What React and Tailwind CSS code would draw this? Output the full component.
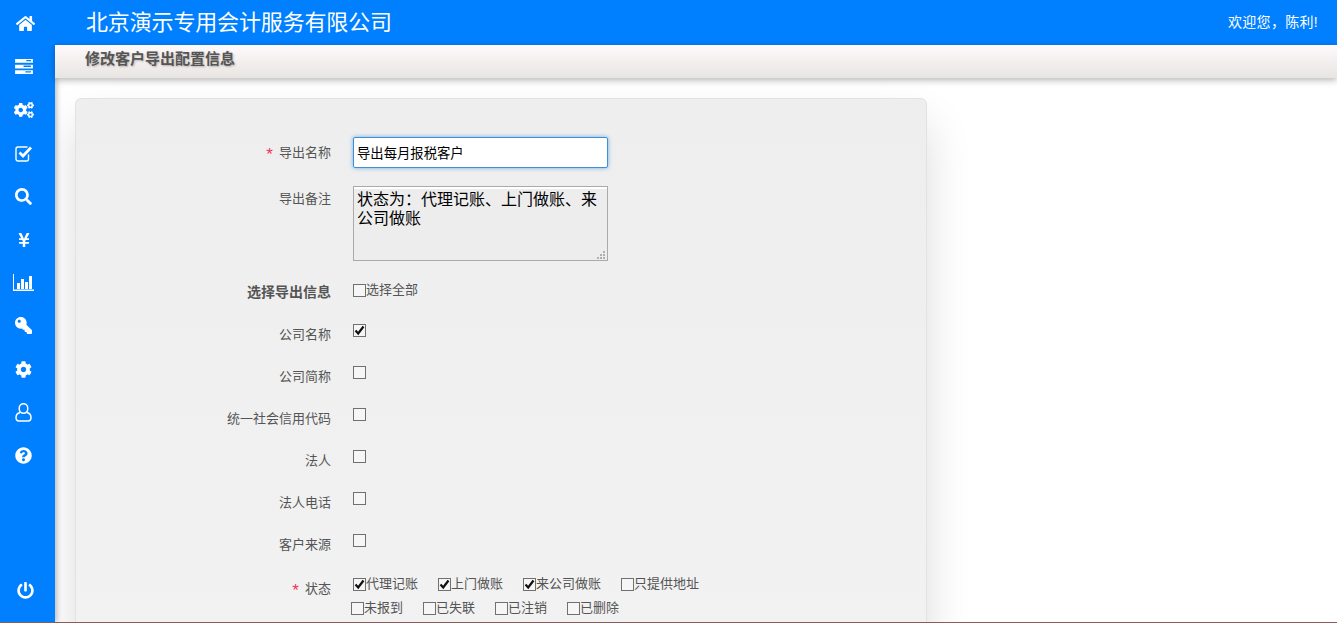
import { FaHome, FaCogs, FaSearch, FaYenSign, FaKey, FaCog, FaQuestionCircle, FaPowerOff } from "react-icons/fa";

const CJK = "font-['Liberation_Sans','Noto_Sans_CJK_SC',sans-serif]";

function ServerIcon() {
  return (
    <svg width="18" height="15" viewBox="0 0 19 16">
      <path
        fill="currentColor"
        fillRule="evenodd"
        d="M0 0h19v4H0zM12 1v1.500h5V1zM0 6h19v4H0zM9 7v1.500h8V7zM0 12h19v4H0zM11 13v1.500h6V13z"
      />
    </svg>
  );
}

function CheckSquareIcon() {
  return (
    <svg width="18" height="17" viewBox="0 0 18 17" fill="none" stroke="currentColor">
      <path d="M13.500 9.500v4.500a2 2 0 0 1-2 2H3a2 2 0 0 1-2-2V4a2 2 0 0 1 2-2h9.500" strokeWidth="1.400" />
      <path d="M4.500 7.500l3.500 3.500 8-8.500" strokeWidth="2.800" />
    </svg>
  );
}

function UserIcon() {
  return (
    <svg width="17" height="19" viewBox="0 0 17 19" fill="none" stroke="currentColor" strokeWidth="1.500">
      <ellipse cx="8.500" cy="5.500" rx="4.300" ry="4.800" />
      <path d="M5 9.500C2.500 10.200 1 11.500 1 14.500c0 2 1 3.500 3 3.500h9c2 0 3-1.500 3-3.500 0-3-1.500-4.300-4-5" />
    </svg>
  );
}

function BarChartIcon() {
  return (
    <svg width="21" height="17" viewBox="0 0 21 17" fill="currentColor">
      <path d="M0 0h1v15.500h20V17H0z" />
      <rect x="4" y="9" width="3" height="6" />
      <rect x="8" y="5" width="3" height="10" />
      <rect x="12" y="8" width="3" height="7" />
      <rect x="16" y="2" width="3" height="13" />
    </svg>
  );
}

const NAV_ICONS = [
  { id: "home", icon: <FaHome size={19} className="ml-[3px]" /> },
  { id: "server", icon: <ServerIcon /> },
  { id: "cogs", icon: <FaCogs size={20} /> },
  { id: "check", icon: <CheckSquareIcon /> },
  { id: "search", icon: <FaSearch size={17} /> },
  { id: "yen", icon: <FaYenSign size={16} /> },
  { id: "chart", icon: <BarChartIcon /> },
  { id: "key", icon: <FaKey size={17} className="-scale-x-100" /> },
  { id: "cog", icon: <FaCog size={17} /> },
  { id: "user", icon: <UserIcon /> },
  { id: "help", icon: <FaQuestionCircle size={17} /> },
];

const FIELDS = ["公司名称", "公司简称", "统一社会信用代码", "法人", "法人电话", "客户来源"];

const STATUS_ROW_1 = [
  { text: "代理记账", checked: true, width: "w-[85px]" },
  { text: "上门做账", checked: true, width: "w-[85px]" },
  { text: "来公司做账", checked: true, width: "w-[98px]" },
  { text: "只提供地址", checked: false, width: "" },
];

const STATUS_ROW_2 = ["未报到", "已失联", "已注销", "已删除"];

function Check({ checked }) {
  return (
    <span className="flex h-[13px] w-[13px] shrink-0 items-center justify-center border border-[#707070] bg-[#f6f6f6]">
      {checked && (
        <svg width="11" height="11" viewBox="0 0 11 11">
          <path d="M1.500 5.500 L4.200 8.500 L9.500 1.500" fill="none" stroke="#111" strokeWidth="2.200" />
        </svg>
      )}
    </span>
  );
}

function Star() {
  return <span className="relative top-[3px] mr-[6px] text-[17px] leading-none text-[#f0325a]">*</span>;
}

function Row({ label, bold, children }) {
  return (
    <div className="flex h-[42px] items-start pt-[11px]">
      <div className={`w-[255px] text-right leading-5 text-[#555] ${bold ? "text-[14px] font-bold" : "pt-[1px] text-[13px]"}`}>
        {label}
      </div>
      <div className="ml-[22px]">{children}</div>
    </div>
  );
}

export default function App() {
  return (
    <div className={`${CJK} flex h-[623px] overflow-hidden border-b border-[#8a5c5c] bg-white`}>
      {/* Sidebar */}
      <div className="relative z-20 flex w-[55px] shrink-0 flex-col items-center bg-[#0080ff] pb-[23px] pr-[8px] pt-[2px] text-white shadow-[2px_0_5px_rgba(0,0,0,0.25)]">
        {NAV_ICONS.map((item) => (
          <div key={item.id} className="flex h-[43.2px] w-full shrink-0 items-center justify-center">
            {item.icon}
          </div>
        ))}
        <div className="ml-[3px] mt-auto">
          <FaPowerOff size={17} />
        </div>
      </div>

      <div className="flex min-w-0 flex-1 flex-col">
        {/* Header */}
        <div className="relative z-30 flex h-[45px] shrink-0 items-center justify-between bg-[#0080ff] pl-[31px] pr-[19px] text-white">
          <span className="text-[22px] tracking-[-0.15px]">北京演示专用会计服务有限公司</span>
          <span className="text-[14px] tracking-[0.3px]">欢迎您，陈利!</span>
        </div>

        {/* Page title */}
        <div className="relative z-30 flex h-[33px] shrink-0 items-center bg-gradient-to-b from-[#fffafc] to-[#e7e5e2] pb-[4px] pl-[30px] text-[15px] font-bold text-[#555] shadow-[0_2px_7px_rgba(0,0,0,0.3)] [text-shadow:1px_1px_2px_rgba(0,0,0,0.25)]">
          修改客户导出配置信息
        </div>

        {/* Form card */}
        <div className="min-h-0 flex-1 pl-[20px] pt-[20px]">
          <div className="w-[852px] rounded-t-[6px] border border-[#e2e2e2] bg-gradient-to-b from-[#eeeeee] to-[#f2f2f2] pb-[60px] pt-[38px] shadow-[0_25px_45px_rgba(0,0,0,0.14)]">
            <div className="flex h-[31px] items-center">
              <div className="w-[255px] text-right text-[13px] leading-5 text-[#555]">
                <Star />
                导出名称
              </div>
              <input
                readOnly
                value="导出每月报税客户"
                className="ml-[22px] h-[31px] w-[255px] rounded-[2px] border border-[#3d8fdc] bg-white px-[3px] text-[13.33px] text-black shadow-[0_0_4px_rgba(61,143,220,0.7)] outline-none"
              />
            </div>

            <div className="mt-[18px] flex h-[75px] items-start">
              <div className="w-[255px] pt-[3px] text-right text-[13px] leading-5 text-[#555]">导出备注</div>
              <div className="relative ml-[22px] h-[75px] w-[255px]">
                <textarea
                  readOnly
                  value="状态为：代理记账、上门做账、来公司做账"
                  className="block h-full w-full resize-none border border-[#aaaaaa] bg-[#ededed] px-[3px] pt-[3px] text-[16px] leading-[19px] text-black shadow-[inset_0_2px_0_#ffffff] outline-none"
                />
                <svg className="absolute bottom-[2px] right-[3px]" width="8" height="8" viewBox="0 0 8 8" fill="#b0b0b0">
                  <rect x="6" y="0" width="2" height="2" />
                  <rect x="3" y="3" width="2" height="2" />
                  <rect x="6" y="3" width="2" height="2" />
                  <rect x="0" y="6" width="2" height="2" />
                  <rect x="3" y="6" width="2" height="2" />
                  <rect x="6" y="6" width="2" height="2" />
                </svg>
              </div>
            </div>

            <div className="mt-[10px]">
              <Row label="选择导出信息" bold>
                <div className="flex items-center text-[13px] leading-4 text-[#555]">
                  <Check />
                  <span>选择全部</span>
                </div>
              </Row>

              {FIELDS.map((field, i) => (
                <Row key={field} label={field}>
                  <Check checked={i === 0} />
                </Row>
              ))}

              <Row
                label={
                  <span className="relative top-[2px]">
                    <Star />
                    状态
                  </span>
                }
              >
                <div className="flex text-[13px] leading-4 text-[#555]">
                  {STATUS_ROW_1.map((opt) => (
                    <div key={opt.text} className={`flex items-center ${opt.width}`}>
                      <Check checked={opt.checked} />
                      <span>{opt.text}</span>
                    </div>
                  ))}
                </div>
                <div className="-ml-[2px] mt-[8px] flex text-[13px] leading-4 text-[#555]">
                  {STATUS_ROW_2.map((text) => (
                    <div key={text} className="flex w-[72px] items-center">
                      <Check />
                      <span>{text}</span>
                    </div>
                  ))}
                </div>
              </Row>
            </div>
          </div>
        </div>
      </div>
    </div>
  );
}
